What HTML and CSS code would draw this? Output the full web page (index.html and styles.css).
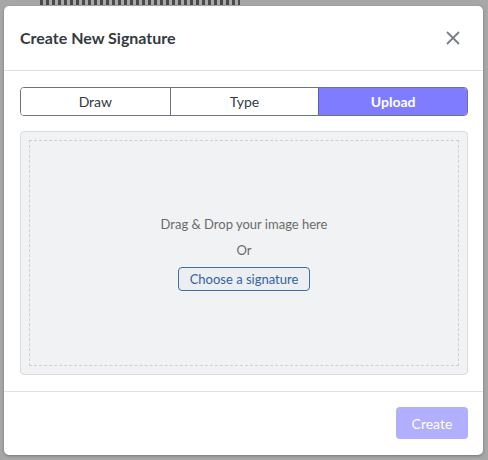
FILE: index.html
```html
<!DOCTYPE html>
<html lang="en">
<head>
    <meta charset="UTF-8">
    <meta name="viewport" content="width=device-width, initial-scale=1.0">
    <title>Create New Signature</title>
    <link rel="stylesheet" href="styles.css">
</head>
<body>
    <div class="backdrop"></div>
    <div class="modal">
        <div class="modal-header">
            <div class="modal-title">Create New Signature</div>
            <button class="close" aria-label="Close">
                <svg width="14" height="14" viewBox="0 0 14 14">
                    <path d="M1 1 L13 13 M13 1 L1 13" stroke="#7a7f86" stroke-width="1.8" fill="none"/>
                </svg>
            </button>
        </div>
        <div class="modal-body">
            <div class="tabs">
                <button class="tab">Draw</button>
                <button class="tab">Type</button>
                <button class="tab active">Upload</button>
            </div>
            <div class="dropzone">
                <div class="drop-inner">
                    <div class="drop-text">Drag &amp; Drop your image here</div>
                    <div class="drop-text">Or</div>
                    <button class="choose">Choose a signature</button>
                </div>
            </div>
        </div>
        <div class="modal-footer">
            <button class="create" disabled>Create</button>
        </div>
    </div>
</body>
</html>
```
FILE: styles.css
```css
body {
    margin: 0;
    height: 460px;
    background-color: #a7a7a7;
    font-family: Lato, 'Liberation Sans', sans-serif;
    overflow: hidden;
    position: relative;
}

/* scribbles of the page behind the overlay */
.backdrop {
    position: absolute;
    top: 0;
    left: 40px;
    width: 200px;
    height: 5px;
    background: repeating-linear-gradient(90deg, #222 0 3px, transparent 3px 6px);
    opacity: 0.7;
}

.modal {
    position: absolute;
    top: 6px;
    left: 4px;
    width: 479px;
    height: 449px;
    background-color: #fff;
    border-radius: 5px;
    box-shadow: 0 1px 3px rgba(0, 0, 0, 0.3);
    display: flex;
    flex-direction: column;
}

.modal-header {
    height: 64px;
    border-bottom: 1px solid #dee2e6;
    display: flex;
    align-items: center;
    justify-content: space-between;
    padding: 0 23px 0 16px;
}

.modal-title {
    font-size: 16px;
    font-weight: bold;
    color: #343a40;
}

.close {
    border: none;
    background: none;
    padding: 0;
    width: 14px;
    height: 14px;
    cursor: pointer;
}

.modal-body {
    padding: 16px 15px 16px 16px;
    flex: 1;
    display: flex;
    flex-direction: column;
}

.tabs {
    display: grid;
    grid-template-columns: repeat(3, 1fr);
    border: 1px solid #6c757d;
    border-radius: 4px;
    overflow: hidden;
    height: 29px;
    box-sizing: border-box;
}

.tab {
    border: none;
    border-left: 1px solid #6c757d;
    background-color: #fff;
    font-family: Lato, 'Liberation Sans', sans-serif;
    font-size: 14px;
    color: #343a40;
    padding: 0;
}

.tab:first-child {
    border-left: none;
}

.tab.active {
    background-color: #7f7cff;
    color: #fff;
    font-weight: bold;
    border-left-color: #5b58d6;
}

.dropzone {
    margin-top: 15px;
    height: 244px;
    box-sizing: border-box;
    background-color: #f1f2f4;
    border: 1px solid #dadce0;
    border-radius: 4px;
    padding: 8px;
}

.drop-inner {
    height: 100%;
    box-sizing: border-box;
    border: 1px dashed #cdcfd3;
    display: flex;
    flex-direction: column;
    align-items: center;
    justify-content: center;
    padding-bottom: 4px;
}

.drop-text {
    font-size: 13px;
    color: #6b6b6b;
    line-height: 26px;
}

.choose {
    margin-top: 4px;
    font-family: Lato, 'Liberation Sans', sans-serif;
    font-size: 13px;
    color: #2f64a0;
    background-color: #eceef2;
    border: 1px solid #3c6fa6;
    border-radius: 4px;
    height: 24px;
    padding: 0 11px;
}

.modal-footer {
    border-top: 1px solid #dee2e6;
    height: 64px;
    display: flex;
    align-items: center;
    justify-content: flex-end;
    padding: 0 15px;
}

.create {
    border: none;
    border-radius: 4px;
    background-color: #b2afff;
    color: #fff;
    font-family: Lato, 'Liberation Sans', sans-serif;
    font-size: 14px;
    width: 72px;
    height: 32px;
}
```
